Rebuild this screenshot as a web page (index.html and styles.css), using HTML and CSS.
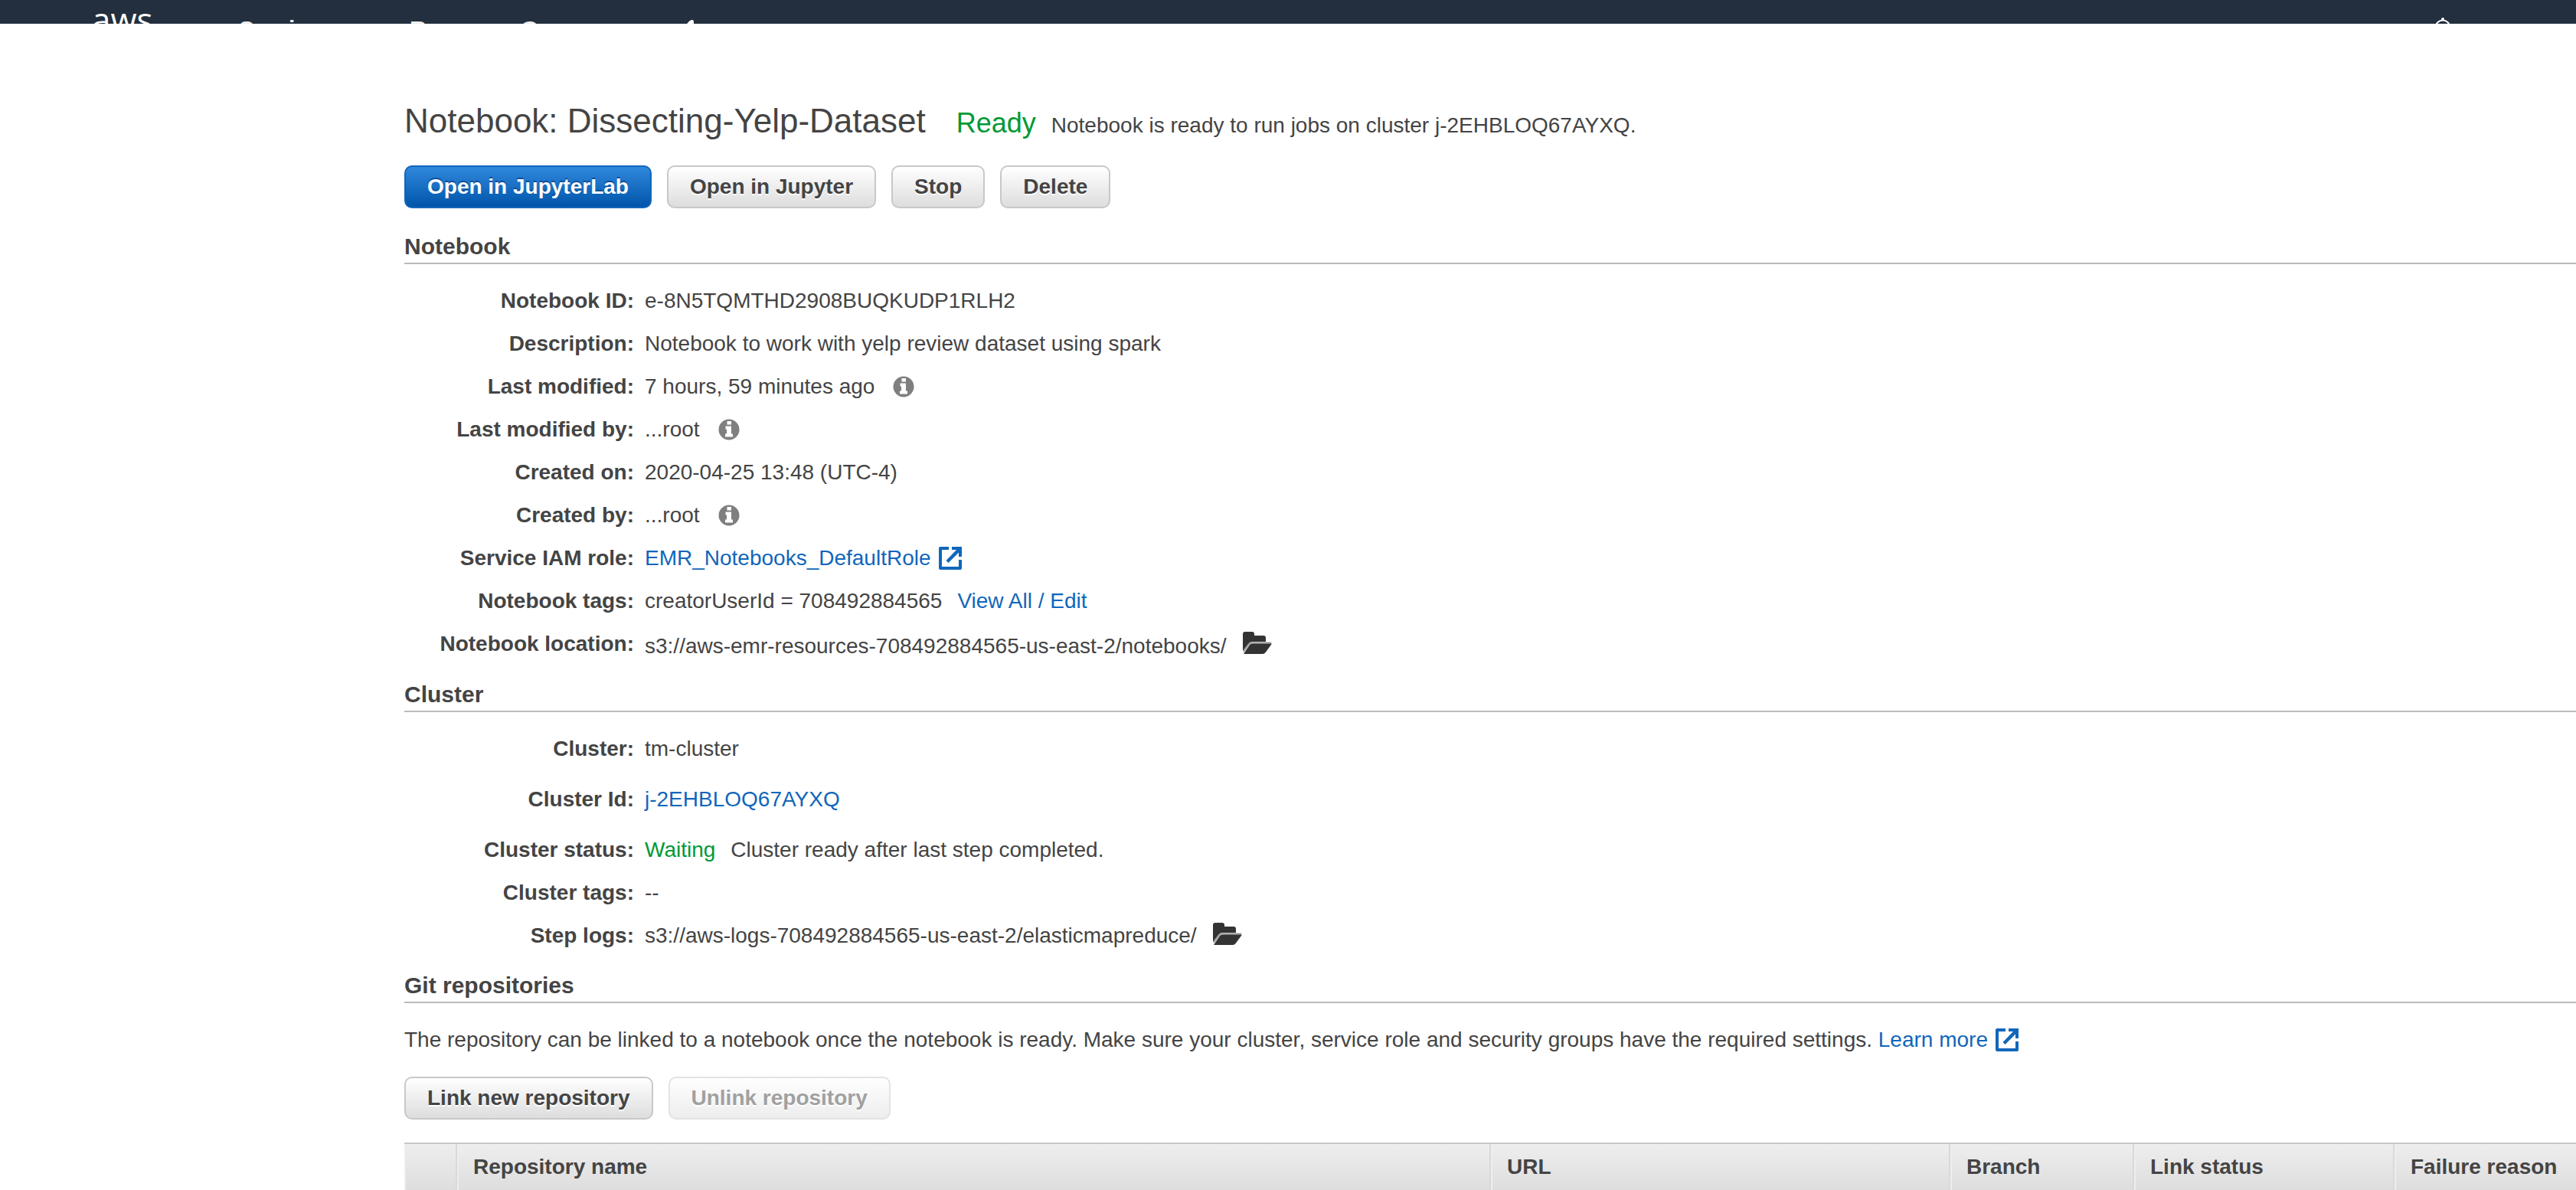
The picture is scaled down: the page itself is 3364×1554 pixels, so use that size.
FILE: index.html
```html
<!DOCTYPE html>
<html lang="en">
<head>
<meta charset="utf-8">
<title>Amazon EMR - Notebook</title>
<link rel="stylesheet" href="styles.css">
</head>
<body>
<svg class="sprites" aria-hidden="true">
  <symbol id="info" viewBox="0 0 28 28">
    <circle cx="14" cy="14" r="13.500" fill="#7f7f7f"/>
    <path d="M11.500 3h5.500v4.500h-5.500zM9.500 9.500h7.500v10h2v4h-10v-4h2v-6h-1.500z" fill="#fff"/>
  </symbol>
  <symbol id="external" viewBox="0 0 30 30">
    <path d="M13 2H2v26h26V17" fill="none" stroke="#1166bb" stroke-width="4" stroke-linejoin="round"/>
    <path d="M17 0h13v13h-4V7.500L12.500 21l-3-3L23 4h-6z" fill="#1166bb"/>
  </symbol>
  <symbol id="folder" viewBox="0 0 40 30">
    <path d="M1 26V4q0-3 3-3h9q3 0 3 3v2h12q3 0 3 3v5H13q-3 0-5 3z" fill="#333"/>
    <path d="M2 27L9 17q1.500-1.500 4-1.500h25" fill="none" stroke="#999" stroke-width="2"/>
    <path d="M2 30L10 18q1-1.500 4-1.500h25l-8 11q-2 2.500-4 2.500z" fill="#333"/>
  </symbol>
</svg>
<header class="topbar">
  <a class="logo" href="#">aws</a>
  <nav class="menu">
    <a class="services" href="#">Services</a>
    <a class="groups" href="#">Resource Groups</a>
    <svg class="pin" viewBox="0 0 24 24"><path d="M15 0q2 0 2 3v5l3 7-7 1-8 8-2-10 2-5 4-5q3-4 6-4z" fill="#fff"/></svg>
  </nav>
  <svg class="bell" viewBox="0 0 24 28"><circle cx="12" cy="2" r="2" fill="#fff"/><path d="M3 22V12a9 8.500 0 0 1 18 0v10z" fill="none" stroke="#fff" stroke-width="2"/></svg>
</header>
<main class="page">
  <div class="title">
    <h1>Notebook: Dissecting-Yelp-Dataset</h1>
    <span class="state">Ready</span>
    <span>Notebook is ready to run jobs on cluster j-2EHBLOQ67AYXQ.</span>
  </div>
  <div class="actions">
    <button class="btn primary">Open in JupyterLab</button>
    <button class="btn">Open in Jupyter</button>
    <button class="btn">Stop</button>
    <button class="btn">Delete</button>
  </div>

  <section>
    <h2>Notebook</h2>
    <dl class="details">
      <dt>Notebook ID:</dt><dd>e-8N5TQMTHD2908BUQKUDP1RLH2</dd>
      <dt>Description:</dt><dd>Notebook to work with yelp review dataset using spark</dd>
      <dt>Last modified:</dt><dd class="with-icon">7 hours, 59 minutes ago <svg class="info"><use href="#info"/></svg></dd>
      <dt>Last modified by:</dt><dd class="with-icon">...root <svg class="info"><use href="#info"/></svg></dd>
      <dt>Created on:</dt><dd>2020-04-25 13:48 (UTC-4)</dd>
      <dt>Created by:</dt><dd class="with-icon">...root <svg class="info"><use href="#info"/></svg></dd>
      <dt>Service IAM role:</dt><dd><a class="ext-link" href="#">EMR_Notebooks_DefaultRole <svg class="external"><use href="#external"/></svg></a></dd>
      <dt>Notebook tags:</dt><dd class="pair"><span>creatorUserId = 708492884565</span><a href="#">View All / Edit</a></dd>
      <dt>Notebook location:</dt><dd class="with-folder low">s3://aws-emr-resources-708492884565-us-east-2/notebooks/ <svg class="folder"><use href="#folder"/></svg></dd>
    </dl>
  </section>

  <section>
    <h2>Cluster</h2>
    <dl class="details">
      <dt>Cluster:</dt><dd>tm-cluster</dd>
      <dt class="roomy">Cluster Id:</dt><dd class="roomy"><a href="#">j-2EHBLOQ67AYXQ</a></dd>
      <dt>Cluster status:</dt><dd class="pair"><span class="ok">Waiting</span><span>Cluster ready after last step completed.</span></dd>
      <dt>Cluster tags:</dt><dd>--</dd>
      <dt>Step logs:</dt><dd class="with-folder">s3://aws-logs-708492884565-us-east-2/elasticmapreduce/ <svg class="folder"><use href="#folder"/></svg></dd>
    </dl>
  </section>

  <section>
    <h2>Git repositories</h2>
    <p class="note">The repository can be linked to a notebook once the notebook is ready. Make sure your cluster, service role and security groups have the required settings. <a class="ext-link" href="#">Learn more <svg class="external"><use href="#external"/></svg></a></p>
    <div class="actions">
      <button class="btn">Link new repository</button>
      <button class="btn" disabled>Unlink repository</button>
    </div>
    <table class="repos">
      <colgroup><col class="c-select"><col class="c-name"><col class="c-url"><col class="c-branch"><col class="c-status"><col></colgroup>
      <thead><tr><td></td><th>Repository name</th><th>URL</th><th>Branch</th><th>Link status</th><th>Failure reason</th></tr></thead>
    </table>
  </section>
</main>
</body>
</html>
```

FILE: styles.css
```css
* { box-sizing: border-box; }
body {
  margin: 0;
  background: #fff;
  color: #444;
  font: 28px/32px "Liberation Sans", Arial, sans-serif;
  overflow: hidden;
}
a { color: #1166bb; text-decoration: none; }
.sprites { display: none; }

.topbar {
  display: flex;
  align-items: flex-start;
  height: 31px;
  padding: 0 162px 0 120px;
  overflow: hidden;
  background: #232f3e;
}
.topbar a { color: #eee; font-size: 30px; font-weight: bold; white-space: nowrap; }
.topbar .logo { width: 192px; font: 500 44px/50px "Open Sans", sans-serif; color: #fff; }
.menu { display: flex; flex: 1; padding-top: 22px; }
.services { width: 223px; }
.groups { width: 354px; }
.pin { width: 24px; height: 24px; margin-top: 4px; }
.bell { width: 24px; height: 28px; margin-top: 23px; }

.page { padding: 95px 0 0 528px; }
.title { display: flex; align-items: baseline; height: 64px; gap: 20px; white-space: nowrap; }
h1 { margin: 0 20px 0 0; font-size: 44px; font-weight: normal; line-height: 64px; }
.state { color: #009933; font-size: 36px; }
.ok { color: #009933; }

.actions { display: flex; gap: 20px; margin-top: 26px; }
.btn {
  height: 56px;
  padding: 0 28px;
  border: 2px solid #c8c8c8;
  border-radius: 10px;
  background: linear-gradient(#fff, #ddd);
  color: #444;
  font: bold 28px/32px "Liberation Sans", Arial, sans-serif;
  text-shadow: 0 2px 0 #fff;
}
.btn.primary {
  border-color: #1166bb;
  background: linear-gradient(#3088dd, #0055aa);
  color: #fff;
  text-shadow: 0 -2px 0 #0a4f99;
}
.btn:disabled { opacity: .5; }

h2 {
  margin: 33px 0 0;
  padding-bottom: 4px;
  border-bottom: 2px solid #bbb;
  font-size: 30px;
  line-height: 34px;
}
.details {
  display: grid;
  grid-template-columns: 300px 1fr;
  column-gap: 14px;
  row-gap: 24px;
  margin: 32px 0 0;
}
.details + h2, section + section h2 { margin-top: 32px; }
dt { font-weight: bold; text-align: right; }
dd { display: flex; align-items: center; height: 32px; margin: 0; white-space: nowrap; }
.roomy { margin: 10px 0; }
.low { height: 33px; padding-top: 5px; }
.with-icon { gap: 24px; }
.with-folder { gap: 20px; }
.pair { gap: 20px; }
.info { width: 28px; height: 28px; }
.folder { width: 40px; height: 30px; margin-bottom: 6px; }
.low .folder { margin-bottom: 10px; }
.external { width: 30px; height: 30px; flex: none; }
.ext-link { display: inline-flex; align-items: center; gap: 10px; vertical-align: bottom; }

.note { margin: 32px 0 0; white-space: nowrap; }
.note + .actions { margin-top: 32px; }

.repos {
  width: 100%;
  margin-top: 30px;
  border-spacing: 0;
  table-layout: fixed;
  border-top: 2px solid #c8c8c8;
}
.repos thead { background: linear-gradient(#eee, #ddd); }
.repos th, .repos td {
  height: 62px;
  padding: 14px 19px;
  border-left: 2px solid #eee;
  border-right: 2px solid #d9d9d9;
  text-align: left;
  vertical-align: top;
}
.repos th:last-child { border-right: 0; }
.c-select { width: 69px; }
.c-name { width: 1350px; }
.c-url { width: 600px; }
.c-branch { width: 240px; }
.c-status { width: 340px; }
```
